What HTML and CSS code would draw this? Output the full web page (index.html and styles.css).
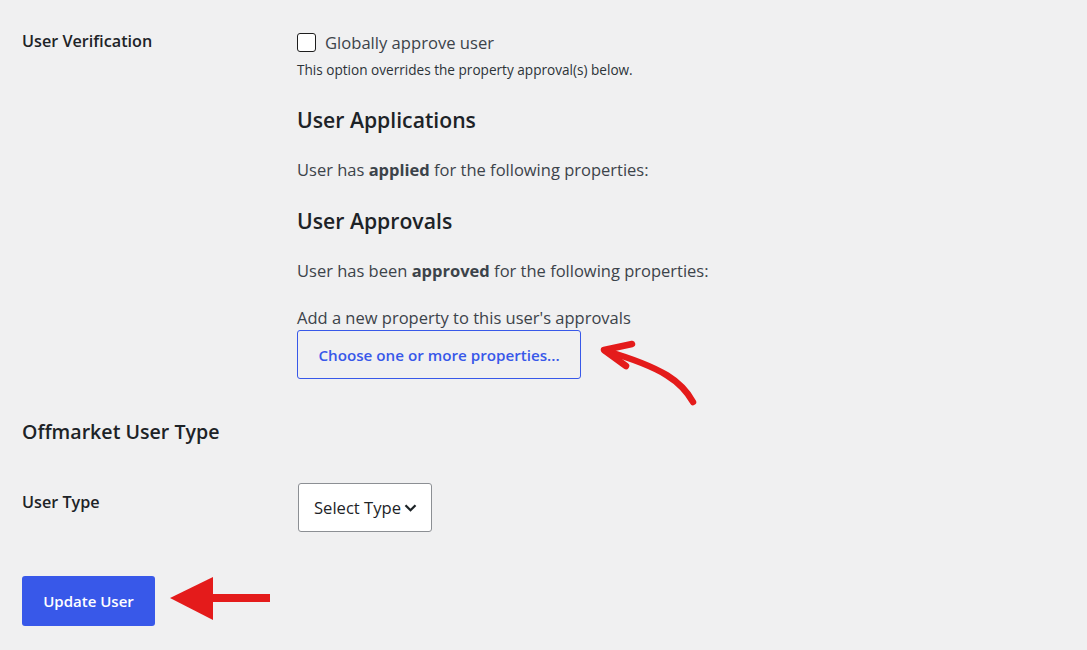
FILE: index.html
```html
<!DOCTYPE html>
<html lang="en">
<head>
<meta charset="utf-8">
<title>Edit User</title>
<link rel="stylesheet" href="styles.css">
</head>
<body>
<main class="page">
  <div class="form-row verify-row">
    <div class="row-label verify-label">User Verification</div>
    <div class="row-field">
      <label class="check-line">
        <span class="checkbox"></span>
        <span>Globally approve user</span>
      </label>
      <p class="description">This option overrides the property approval(s) below.</p>
      <h3 class="sub-title applications">User Applications</h3>
      <p class="body-text">User has <strong>applied</strong> for the following properties:</p>
      <h3 class="sub-title approvals">User Approvals</h3>
      <p class="body-text">User has been <strong>approved</strong> for the following properties:</p>
      <p class="body-text add-line">Add a new property to this user's approvals</p>
      <button class="choose-btn" type="button">Choose one or more properties...</button>
    </div>
  </div>

  <h2 class="section-title">Offmarket User Type</h2>

  <div class="form-row type-row">
    <div class="row-label type-label">User Type</div>
    <div class="row-field">
      <div class="select-box">
        <span>Select Type</span>
        <svg class="chevron" width="13" height="8" viewBox="0 0 13 8"><path d="M1.5 1.2 L6.5 6.2 L11.5 1.2" fill="none" stroke="#1d2327" stroke-width="2.3"/></svg>
      </div>
    </div>
  </div>

  <button class="primary-btn" type="button">Update User</button>

  <svg class="annotations" width="1087" height="650" viewBox="0 0 1087 650">
    <g fill="none" stroke="#e41b1b" stroke-width="6.5" stroke-linecap="round" stroke-linejoin="round">
      <path d="M693 402 C 682 382, 664 368, 606 351"/>
      <path d="M632 344 L604 350 L626 366"/>
    </g>
    <rect x="208" y="594" width="62" height="8" fill="#e41b1b"/>
    <polygon points="170,598 213,577 213,620" fill="#e41b1b"/>
  </svg>
</main>
</body>
</html>
```

FILE: styles.css
```css
html, body {
  margin: 0;
  padding: 0;
  background: #f0f0f1;
}

body {
  font-family: "Open Sans", "Noto Sans", sans-serif;
  color: #3c434a;
  font-size: 16.5px;
  width: 1087px;
  height: 650px;
  overflow: hidden;
}

.page {
  position: relative;
  padding: 0 0 0 22px;
  height: 650px;
  box-sizing: border-box;
}

.form-row {
  display: grid;
  grid-template-columns: 275px 1fr;
}

.row-label {
  font-size: 16.2px;
  font-weight: 600;
  color: #1d2327;
  line-height: 24px;
}

.verify-row {
  padding-top: 29px;
}

.row-field {
  display: flex;
  flex-direction: column;
  align-items: flex-start;
}

.check-line {
  display: flex;
  align-items: center;
  gap: 9px;
  height: 22px;
  margin-top: 2px;
  font-size: 16.6px;
  color: #3c434a;
}

.checkbox {
  width: 17px;
  height: 17px;
  border: 1.5px solid #1e1e1e;
  border-radius: 3px;
  background: #fff;
  box-sizing: content-box;
}

.description {
  margin: 8px 0 0;
  font-size: 13.6px;
  line-height: 18px;
  color: #2c3338;
}

.sub-title {
  margin: 27px 0 0;
  font-size: 21.2px;
  line-height: 28px;
  font-weight: 600;
  color: #1d2327;
}

.sub-title.approvals {
  margin-top: 25px;
}

.body-text {
  margin: 24px 0 0;
  font-size: 16.5px;
  line-height: 24px;
}

.body-text strong {
  font-weight: 700;
  color: #3c434a;
}

.add-line {
  margin-top: 23px;
}

.choose-btn {
  margin-top: 0;
  width: 284px;
  height: 49px;
  border: 1px solid #3858e9;
  border-radius: 3px;
  background: #f0f0f1;
  color: #3858e9;
  font-family: inherit;
  font-size: 15.2px;
  font-weight: 600;
  padding: 0;
}

.section-title {
  margin: 39px 0 0;
  font-size: 19.6px;
  line-height: 28px;
  font-weight: 600;
  color: #1d2327;
}

.type-row {
  margin-top: 37px;
}

.type-label {
  margin-top: 7px;
}

.select-box {
  margin-left: 1px;
  width: 134px;
  height: 49px;
  box-sizing: border-box;
  border: 1px solid #8c8f94;
  border-radius: 3px;
  background: #fff;
  display: flex;
  align-items: center;
  padding-left: 15px;
  gap: 3px;
  font-size: 16.6px;
  color: #1d2327;
}

.chevron {
  margin-top: 1px;
}

.primary-btn {
  display: block;
  margin-top: 44px;
  width: 133px;
  height: 50px;
  border: none;
  border-radius: 3px;
  background: #3858e9;
  color: #fff;
  font-family: inherit;
  font-size: 15px;
  font-weight: 600;
  padding: 0;
}

.annotations {
  position: absolute;
  left: 0;
  top: 0;
  pointer-events: none;
}
```
